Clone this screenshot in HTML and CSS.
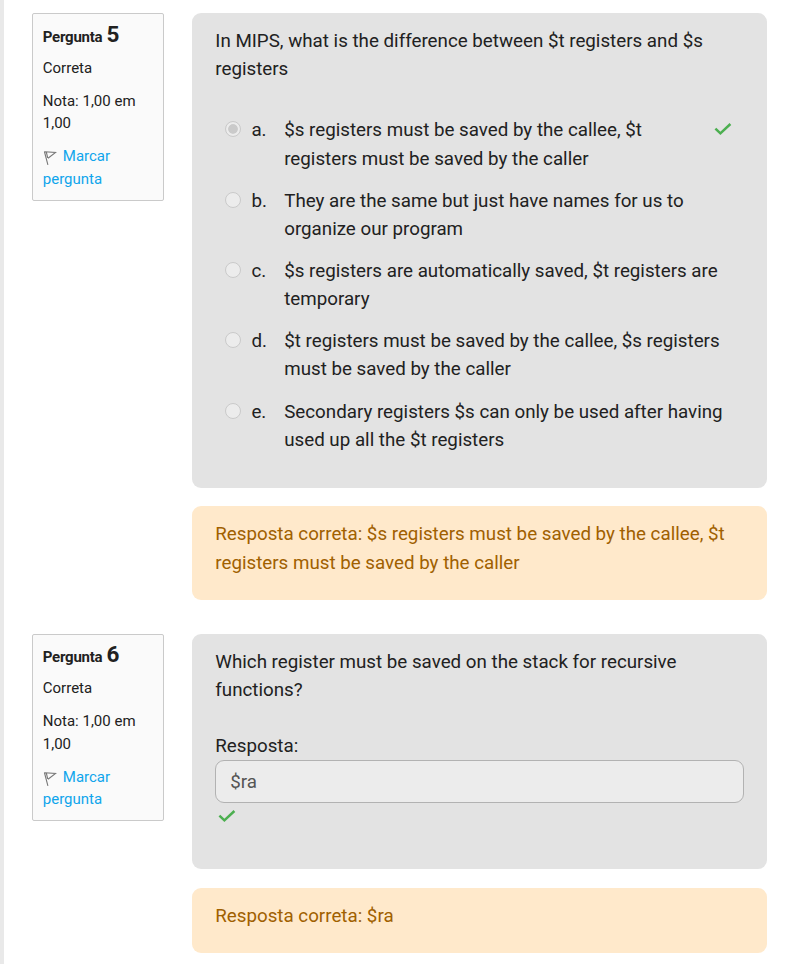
FILE: index.html
```html
<!DOCTYPE html>
<html lang="pt">
<head>
<meta charset="utf-8">
<title>Revisão do teste</title>
<link rel="stylesheet" href="styles.css">
</head>
<body>
<svg class="defs" width="0" height="0">
  <symbol id="flag" viewBox="0 0 14 16">
    <path d="M1.4 1.5 4.9 14.8M1.8 1.8 12.6 2.4 5 8.2M3.4 2.3 4.7 7.8" fill="none" stroke="#777" stroke-width="1.1"/>
  </symbol>
  <symbol id="check" viewBox="0 0 18 14">
    <path d="M1.4 6.6 6.4 11.4 16.4 2" fill="none" stroke="#4caf50" stroke-width="2.5"/>
  </symbol>
</svg>
<main class="page">
  <section class="question">
    <aside class="info">
      <h3 class="number">Pergunta <span>5</span></h3>
      <div class="state">Correta</div>
      <div class="grade">Nota: 1,00 em 1,00</div>
      <div class="mark"><svg class="flag"><use href="#flag"/></svg><a>Marcar pergunta</a></div>
    </aside>
    <div class="content">
      <div class="formulation choice">
        <p class="text">In MIPS, what is the difference between $t registers and $s registers</p>
        <div class="answers">
          <div class="answer"><i class="radio checked"></i><span class="letter">a.</span><p>$s registers must be saved by the callee, $t registers must be saved by the caller</p><svg class="check"><use href="#check"/></svg></div>
          <div class="answer"><i class="radio"></i><span class="letter">b.</span><p>They are the same but just have names for us to organize our program</p></div>
          <div class="answer"><i class="radio"></i><span class="letter">c.</span><p>$s registers are automatically saved, $t registers are temporary</p></div>
          <div class="answer"><i class="radio"></i><span class="letter">d.</span><p>$t registers must be saved by the callee, $s registers must be saved by the caller</p></div>
          <div class="answer"><i class="radio"></i><span class="letter">e.</span><p>Secondary registers $s can only be used after having used up all the $t registers</p></div>
        </div>
      </div>
      <div class="feedback">Resposta correta: $s registers must be saved by the callee, $t registers must be saved by the caller</div>
    </div>
  </section>
  <section class="question">
    <aside class="info">
      <h3 class="number">Pergunta <span>6</span></h3>
      <div class="state">Correta</div>
      <div class="grade">Nota: 1,00 em 1,00</div>
      <div class="mark"><svg class="flag"><use href="#flag"/></svg><a>Marcar pergunta</a></div>
    </aside>
    <div class="content">
      <div class="formulation short">
        <p class="text">Which register must be saved on the stack for recursive functions?</p>
        <div class="response">
          <label for="reply">Resposta:</label>
          <input id="reply" type="text" value="$ra" disabled>
          <svg class="check"><use href="#check"/></svg>
        </div>
      </div>
      <div class="feedback">Resposta correta: $ra</div>
    </div>
  </section>
</main>
</body>
</html>
```
FILE: styles.css
```css
* { box-sizing: border-box; }
body {
  margin: 0;
  background: #fff;
  color: #212121;
  font: 18.75px/28.125px Roboto, "Liberation Sans", sans-serif;
}
p, h3 { margin: 0; }
.defs { display: block; height: 0; }
.page {
  height: 964px;
  overflow: hidden;
  padding: 13px 29px 0 28px;
  border-left: 4px solid #e9e9e9;
}
.question {
  display: grid;
  grid-template-columns: 132px 575px;
  column-gap: 28px;
  align-items: start;
  margin-bottom: 34px;
}
.info {
  height: 188px;
  padding: 6px 10px 0 9.8px;
  border: 1px solid #cacaca;
  border-radius: 2px;
  background: #fafafa;
  font-size: 15px;
  line-height: 22.5px;
}
.question + .question .info { height: 187px; padding-top: 5.3px; }
.question + .question .mark { margin-top: 10.8px; }
.number { font-size: 15px; line-height: 28px; font-weight: 700; letter-spacing: -0.25px; }
.number span { margin-left: 0.8px; font-size: 22.5px; letter-spacing: 0; }
.state { margin-top: 6px; }
.grade, .mark { margin-top: 10.3px; }
.mark, .mark a { color: #0fa5ec; }
.flag { width: 14px; height: 16px; margin-right: 6px; vertical-align: -5px; }
.formulation {
  padding: 14px 23px 0 23.3px;
  border-radius: 9px;
  background: #e3e3e3;
}
.choice { height: 475px; }
.short { height: 235px; }
.answers { margin-top: 33.2px; }
.answer {
  display: flex;
  align-items: flex-start;
  margin-bottom: 14.06px;
  padding-left: 9.5px;
}
.answer p { flex: 1; }
.answer .check { margin: 6px 11.7px 0 24px; }
.radio {
  flex: none;
  width: 16px;
  height: 16px;
  margin: 5px 10.6px 0 0;
  border: 1px solid #cacaca;
  border-radius: 50%;
  background: #ececec;
}
.checked { padding: 2px; background: #cacaca content-box; box-shadow: inset 0 0 0 2px #ececec; }
.letter { width: 32.8px; }
.check { display: block; width: 18px; height: 14px; }
.response { margin-top: 27.8px; }
.response label { display: block; }
.response input {
  display: block;
  width: 529px;
  height: 43px;
  margin-left: -0.3px;
  padding: 0 14.3px;
  border: 1px solid #b2b2b2;
  border-radius: 9px;
  background: #ececec;
  color: #555;
  font: inherit;
}
.response .check { margin: 6px 0 0 2.9px; }
.feedback {
  height: 94px;
  margin-top: 18px;
  padding: 14.4px 23px 0 23.3px;
  border-radius: 9px;
  background: #ffe9cb;
  color: #a06000;
}
.short + .feedback { height: 65px; margin-top: 19px; padding-top: 14px; }
```
